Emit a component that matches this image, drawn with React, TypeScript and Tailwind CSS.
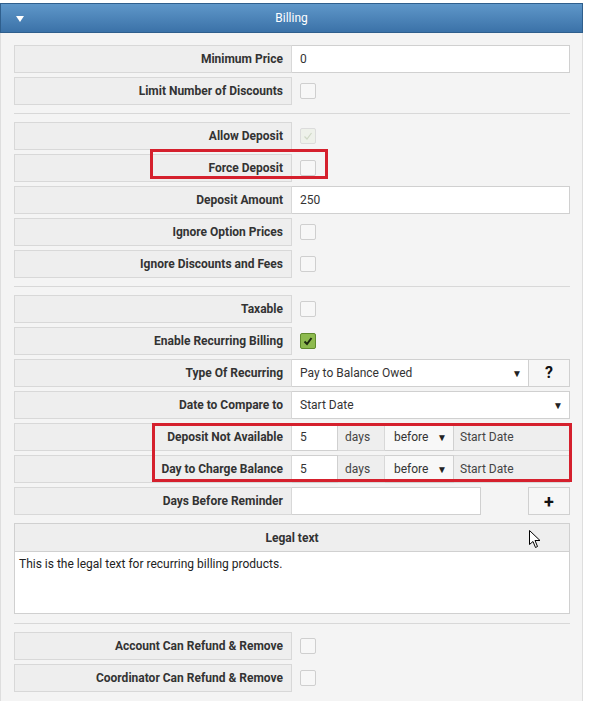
import type { ReactNode } from "react";

const font = { fontFamily: "Roboto, 'Liberation Sans', sans-serif" };

function Label({ children }: { children: ReactNode }) {
  return (
    <div className="w-[278px] h-full shrink-0 bg-[#eeeeee] border border-[#d8d8d8] flex items-center justify-end pr-[8px] font-bold text-[12px] text-[#333]">
      {children}
    </div>
  );
}

function Row({ label, children }: { label: string; children?: ReactNode }) {
  return (
    <div className="flex h-[28px] items-stretch">
      <Label>{label}</Label>
      <div className="flex-1 flex items-stretch">{children}</div>
    </div>
  );
}

function TextInput({ value, className = "" }: { value: string; className?: string }) {
  return (
    <div
      className={`bg-white border border-[#d0d0d0] border-l-0 flex items-center pl-[8px] text-[12px] text-[#333] ${className}`}
    >
      {value}
    </div>
  );
}

function Check({ checked, disabled }: { checked?: boolean; disabled?: boolean }) {
  let box = "bg-[#f7f7f7] border-[#cfcfcf]";
  if (checked && !disabled) box = "bg-[#8dba4e] border-[#5f8a2c]";
  if (checked && disabled) box = "bg-[#eef1ea] border-[#dcdcdc]";
  return (
    <div className="flex items-center pl-[8px]">
      <div className={`w-[16px] h-[16px] rounded-[2px] border flex items-center justify-center ${box}`}>
        {checked && (
          <svg width="12" height="12" viewBox="0 0 12 12">
            <path
              d="M2.5 6.5 L5 9 L9.5 3"
              fill="none"
              stroke={disabled ? "#cfd8c6" : "#1d2a10"}
              strokeWidth={disabled ? 1.2 : 2}
            />
          </svg>
        )}
      </div>
    </div>
  );
}

function Select({ value, className = "" }: { value: string; className?: string }) {
  return (
    <div
      className={`bg-white border border-[#d0d0d0] border-l-0 flex items-center justify-between pl-[8px] pr-[6px] text-[12px] text-[#333] ${className}`}
    >
      <span>{value}</span>
      <span className="text-[10px] text-[#222]">▼</span>
    </div>
  );
}

function Sep() {
  return <div className="h-px bg-[#d8d8d8] mt-[8px] mb-[8px]" />;
}

export default function App() {
  return (
    <div className="w-[589px] h-[701px] bg-white pt-[3px] overflow-hidden" style={font}>
      <div className="w-[583px] bg-[#f4f4f4] border-r border-l border-[#dedede] pb-[12px]">
        <div className="relative h-[30px] -mx-px bg-gradient-to-b from-[#5f97c9] to-[#3b72a8] border border-[#2f5f8d] flex items-center justify-center text-white text-[12px]">
          <svg className="absolute left-[15px] top-[12px]" width="8" height="6" viewBox="0 0 8 6">
            <path d="M0 0 H8 L4 6 Z" fill="#ffffff" />
          </svg>
          Billing
        </div>

        <div className="pl-[13px] pr-[12px] pt-[12px] flex flex-col">
          <div className="flex flex-col gap-[4px]">
            <Row label="Minimum Price">
              <TextInput value="0" className="flex-1" />
            </Row>
            <Row label="Limit Number of Discounts">
              <Check />
            </Row>
          </div>
          <Sep />
          <div className="flex flex-col gap-[4px]">
            <Row label="Allow Deposit">
              <Check checked disabled />
            </Row>
            <div className="relative">
              <Row label="Force Deposit">
                <Check />
              </Row>
              <div className="absolute left-[136px] top-[-5px] w-[178px] h-[30px] border-[3px] border-[#d5202d]" />
            </div>
            <Row label="Deposit Amount">
              <TextInput value="250" className="flex-1" />
            </Row>
            <Row label="Ignore Option Prices">
              <Check />
            </Row>
            <Row label="Ignore Discounts and Fees">
              <Check />
            </Row>
          </div>
          <Sep />
          <div className="flex flex-col gap-[4px]">
            <Row label="Taxable">
              <Check />
            </Row>
            <Row label="Enable Recurring Billing">
              <Check checked />
            </Row>
            <Row label="Type Of Recurring">
              <Select value="Pay to Balance Owed" className="flex-1" />
              <div className="w-[41px] bg-[#f6f6f6] border border-[#d0d0d0] border-l-0 flex items-center justify-center font-bold text-[16px] text-[#111]">
                ?
              </div>
            </Row>
            <Row label="Date to Compare to">
              <Select value="Start Date" className="flex-1" />
            </Row>
            <div className="relative flex flex-col gap-[4px]">
              {["Deposit Not Available", "Day to Charge Balance"].map((l) => (
                <Row key={l} label={l}>
                  <TextInput value="5" className="w-[46px]" />
                  <div className="w-[47px] bg-[#eeeeee] border border-[#d8d8d8] border-l-0 flex items-center pl-[7px] text-[12px] text-[#444]">
                    days
                  </div>
                  <div className="w-[69px] bg-[#f8f8f8] border border-[#d0d0d0] border-l-0 flex items-center justify-between pl-[9px] pr-[6px] text-[12px] text-[#333]">
                    <span>before</span>
                    <span className="text-[10px] text-[#222]">▼</span>
                  </div>
                  <div className="flex-1 bg-[#eeeeee] border border-[#d8d8d8] border-l-0 flex items-center pl-[6px] text-[12px] text-[#444]">
                    Start Date
                  </div>
                </Row>
              ))}
              <div className="absolute left-[138px] top-0 w-[420px] h-[59px] border-[3px] border-[#d5202d]" />
            </div>
            <Row label="Days Before Reminder">
              <TextInput value="" className="w-[189px]" />
              <div className="flex-1" />
              <div className="w-[42px] bg-[#f6f6f6] border border-[#d0d0d0] flex items-center justify-center font-bold text-[18px] text-[#111]">
                +
              </div>
            </Row>
          </div>

          <div className="relative mt-[8px] border border-[#d0d0d0]">
            <div className="h-[28px] bg-[#eeeeee] border-b border-[#d0d0d0] flex items-center justify-center font-bold text-[12px] text-[#333]">
              Legal text
            </div>
            <div className="h-[61px] bg-white px-[4px] pt-[3px] text-[12px] text-[#222]">
              This is the legal text for recurring billing products.
            </div>
            <svg className="absolute left-[514px] top-[6px]" width="13" height="19" viewBox="0 0 13 19">
              <path
                d="M0.5 0.5 L0.5 14.5 L4 11.5 L6.5 17.5 L8.5 16.5 L6 10.5 L11 10.5 Z"
                fill="#ffffff"
                stroke="#000000"
                strokeWidth="1"
                strokeLinejoin="round"
              />
            </svg>
          </div>
          <div className="h-px bg-[#d8d8d8] mt-[9px] mb-[8px]" />
          <div className="flex flex-col gap-[4px]">
            <Row label="Account Can Refund & Remove">
              <Check />
            </Row>
            <Row label="Coordinator Can Refund & Remove">
              <Check />
            </Row>
          </div>
        </div>
      </div>
    </div>
  );
}
